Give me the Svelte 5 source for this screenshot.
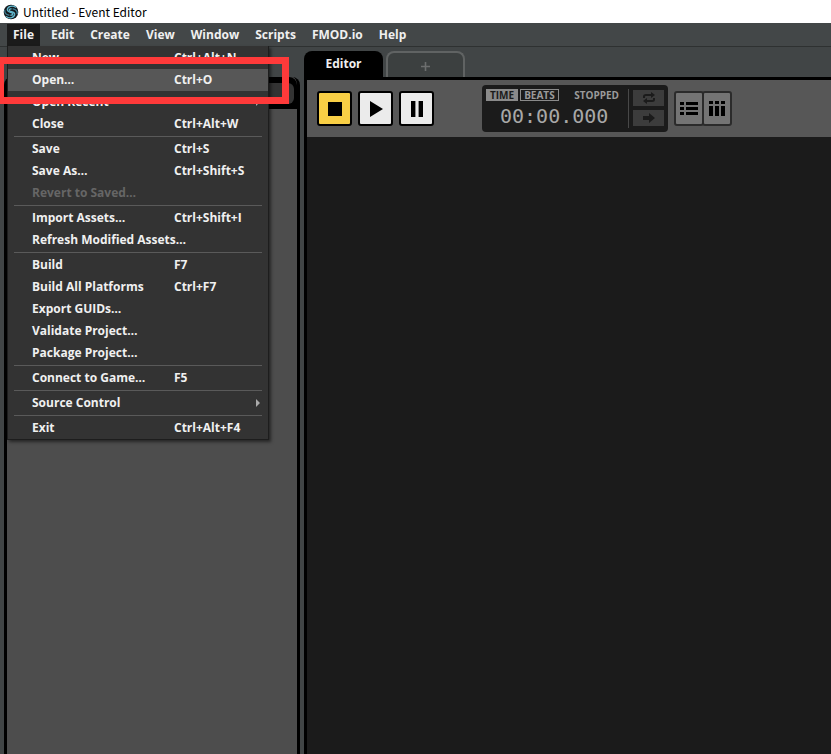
<script>
  const menus = ['File', 'Edit', 'Create', 'View', 'Window', 'Scripts', 'FMOD.io', 'Help'];
  const groups = [
    [
      { label: 'New', key: 'Ctrl+Alt+N' },
      { label: 'Open…', key: 'Ctrl+O', active: true },
      { label: 'Open Recent', sub: true },
      { label: 'Close', key: 'Ctrl+Alt+W' }
    ],
    [
      { label: 'Save', key: 'Ctrl+S' },
      { label: 'Save As…', key: 'Ctrl+Shift+S' },
      { label: 'Revert to Saved…', disabled: true }
    ],
    [
      { label: 'Import Assets…', key: 'Ctrl+Shift+I' },
      { label: 'Refresh Modified Assets…' }
    ],
    [
      { label: 'Build', key: 'F7' },
      { label: 'Build All Platforms', key: 'Ctrl+F7' },
      { label: 'Export GUIDs…' },
      { label: 'Validate Project…' },
      { label: 'Package Project…' }
    ],
    [{ label: 'Connect to Game…', key: 'F5' }],
    [{ label: 'Source Control', sub: true }],
    [{ label: 'Exit', key: 'Ctrl+Alt+F4' }]
  ];
</script>

<div class="app">
  <header class="title">
    <svg width="16" height="16" viewBox="0 0 16 16" aria-hidden="true">
      <circle cx="8" cy="8" r="7.3" fill="#14191d" />
      <g fill="none" stroke="#62b9d0" stroke-width="1.3" stroke-linecap="round">
        <path d="M12.6 3.2C9.6 1.2 4.6 2.4 4.3 5.6C4.2 8 7 8 9 8.8C10.6 9.6 9.6 11.4 7.8 11.2" />
        <path d="M3.4 12.8C6.4 14.8 11.4 13.6 11.7 10.4C11.8 8 9 8 7 7.2C5.4 6.4 6.4 4.6 8.2 4.8" />
        <path d="M1.8 6.4C1.5 9.3 3.2 10.6 6 11.2M14.2 9.6C14.5 6.7 12.8 5.4 10 4.8" stroke="#3e7d93" />
      </g>
    </svg>
    <span>Untitled - Event Editor</span>
  </header>

  <nav class="menubar">
    {#each menus as name, i}
      <div class="slot">
        <button class="top" class:open={i === 0}>{name}</button>
        {#if i === 0}
          <div class="menu" role="menu">
            {#each groups as group}
              <div class="group">
                {#each group as item}
                  <button class="item" class:active={item.active} disabled={item.disabled} role="menuitem">
                    <span class="name">{item.label}</span>
                    <span class="key">{item.key ?? ''}</span>
                    {#if item.sub}
                      <svg width="4" height="8" viewBox="0 0 4 8" aria-hidden="true"><path d="M0 0L4 4L0 8z" fill="#aaa" /></svg>
                    {/if}
                  </button>
                {/each}
              </div>
            {/each}
          </div>
        {/if}
      </div>
    {/each}
  </nav>

  <main class="work">
    <aside class="browser">
      <div class="search"><input type="text" aria-label="Search" /></div>
    </aside>

    <section class="editor">
      <div class="tabs">
        <button class="tab">Editor</button>
        <button class="tab add" aria-label="New tab">
          <svg width="9" height="9" viewBox="0 0 9 9"><path d="M4.5 0V9M0 4.5H9" stroke="#6c6e6e" stroke-width="1.6" /></svg>
        </button>
      </div>
      <div class="panel">
        <div class="toolbar">
          <div class="transport">
            <button class="play stop" aria-label="Stop"><svg width="14" height="14" viewBox="0 0 14 14"><path d="M0 0H14V14H0z" /></svg></button>
            <button class="play" aria-label="Play"><svg width="14" height="16" viewBox="0 0 14 16"><path d="M1 0L14 8L1 16z" /></svg></button>
            <button class="play" aria-label="Pause"><svg width="12" height="16" viewBox="0 0 12 16"><path d="M0 0H4.4V16H0zM7.6 0H12V16H7.6z" /></svg></button>
          </div>
          <div class="display">
            <div class="readout">
              <div class="modes">
                <button class="mode on">TIME</button>
                <button class="mode">BEATS</button>
                <span class="state">STOPPED</span>
              </div>
              <div class="clock">00:00.000</div>
            </div>
            <div class="flags">
              <button aria-label="Loop">
                <svg width="14" height="12" viewBox="0 0 14 12">
                  <path d="M2 6V4.5Q2 3 4 3H10M12 6V7.5Q12 9 10 9H4" fill="none" stroke="#1b1b1b" stroke-width="2" />
                  <path d="M9 0L13 3L9 6zM5 6L1 9L5 12z" fill="#1b1b1b" />
                </svg>
              </button>
              <button aria-label="Follow">
                <svg width="14" height="10" viewBox="0 0 14 10"><path d="M1 3H7V0L13 5L7 10V7H1z" fill="#1b1b1b" /></svg>
              </button>
            </div>
          </div>
          <div class="views">
            <button aria-label="List view">
              <svg width="18" height="13" viewBox="0 0 18 13"><path d="M0 0H4V3H0zM6 0H18V3H6zM0 5H4V8H0zM6 5H18V8H6zM0 10H4V13H0zM6 10H18V13H6z" /></svg>
            </button>
            <button aria-label="Mixer view">
              <svg width="16" height="15" viewBox="0 0 16 15"><path d="M0 0H4V3H0zM6 0H10V3H6zM12 0H16V3H12zM0 5H4V15H0zM6 5H10V15H6zM12 5H16V15H12z" /></svg>
            </button>
          </div>
        </div>
        <div class="canvas"></div>
      </div>
    </section>
  </main>

  <div class="callout"></div>
</div>

<style>
  :global(body) { margin: 0; }
  .app, .app * { box-sizing: border-box; }
  .app {
    position: relative;
    display: flex;
    flex-direction: column;
    height: 100vh;
    overflow: hidden;
    background: #414546;
    color: #f0f0f0;
    font: bold 12px/22px "Open Sans", "Noto Sans", sans-serif;
  }
  button { margin: 0; padding: 0; border: 0; background: none; color: inherit; font: inherit; }
  svg { display: block; }

  .title {
    display: flex;
    align-items: center;
    gap: 4px;
    height: 23px;
    padding-left: 3px;
    background: #fff;
    color: #000;
    font-family: "Noto Sans CJK SC", "Noto Sans", sans-serif;
    font-weight: normal;
    flex: none;
  }
  .menubar {
    display: flex;
    flex: none;
    height: 24px;
    padding: 1px 7px 0;
    background: #434748;
    border-bottom: 1px solid #2e3131;
  }
  .slot { position: relative; }
  .top { display: block; height: 22px; padding: 0 8px; white-space: nowrap; }
  .top.open { padding: 0 6px; background: #1b1b1b; }
  .slot:first-child { margin-right: 3px; }

  .menu {
    position: absolute;
    z-index: 5;
    top: 22px;
    left: 0;
    width: 262px;
    padding: 1px 0 0;
    background: #333;
    border: 1px solid #1d1d1d;
    border-top-width: 0;
    box-shadow: 2px 2px 3px rgba(0, 0, 0, 0.5);
  }
  .group + .group::before {
    content: "";
    display: block;
    height: 1px;
    margin: 1px 6px;
    background: #5a5a5a;
  }
  .item {
    display: flex;
    align-items: center;
    width: 100%;
    height: 22px;
    padding: 0 8px 0 24px;
    text-align: left;
    white-space: nowrap;
  }
  .item.active { background: #575757; }
  .item:disabled { color: #666; }
  .name { width: 142px; }
  .key { flex: 1; }

  .work { display: flex; flex: 1; min-height: 0; padding: 4px 0 0 4px; gap: 4px; }
  .browser {
    flex: 0 0 296px;
    margin-top: 26px;
    background: #4d4d4d;
    border: solid #000;
    border-width: 0 3px;
    border-radius: 8px 8px 0 0;
  }
  .search { height: 32px; padding: 6px 0 5px; background: #000; border-radius: 8px 8px 0 0; }
  .search input {
    display: block;
    width: calc(100% - 3px);
    height: 21px;
    padding: 0 8px;
    border: 0;
    border-radius: 6px;
    background: #333;
    color: inherit;
    font: inherit;
  }

  .editor { display: flex; flex: 1; flex-direction: column; min-width: 0; }
  .tabs { display: flex; gap: 3px; height: 26px; flex: none; }
  .tab { width: 79px; background: #000; border-radius: 8px 8px 0 0; padding-bottom: 1px; }
  .tab.add {
    display: flex;
    align-items: center;
    justify-content: center;
    padding-top: 3px;
    background: #3c4040;
    border: 2px solid #606363;
    border-bottom: 0;
  }
  .panel { display: flex; flex: 1; flex-direction: column; border: solid #000; border-width: 3px 0 0 3px; }
  .toolbar { display: flex; align-items: flex-start; height: 57px; padding: 5px 10px; background: #575757; flex: none; }
  .transport { display: flex; gap: 6px; margin: 6px 48px 0 0; }
  .play {
    display: flex;
    align-items: center;
    justify-content: center;
    width: 35px;
    height: 35px;
    border: 2px solid #000;
    border-radius: 3px;
    background: #ebebeb;
  }
  .stop { background: #f9cf45; }

  .display { display: flex; width: 186px; height: 47px; border-radius: 4px; background: #1b1b1b; padding: 4px; color: #9a9a9a; }
  .readout { flex: 1; border-right: 1px solid #484848; }
  .modes { display: flex; gap: 2px; align-items: center; height: 12px; font-size: 10px; line-height: 10px; }
  .mode { height: 12px; padding: 0 3px; border: 1px solid #8a8a8a; }
  .mode.on { background: #8a8a8a; color: #1b1b1b; }
  .state { margin-left: auto; margin-right: 9px; }
  .clock { padding: 3px 0 0 14px; font: 20px/24px "DejaVu Sans Mono", monospace; color: #a8a8a8; }
  .flags { display: flex; flex-direction: column; gap: 4px; padding: 1px 0 0 4px; }
  .flags button { display: flex; align-items: center; justify-content: center; width: 31px; height: 16px; background: #3c3c3c; }

  .views { display: flex; margin: 6px 0 0 6px; }
  .views button {
    display: flex;
    align-items: center;
    justify-content: center;
    width: 30px;
    height: 35px;
    border: 2px solid #2b2b2b;
    border-radius: 3px;
    background: #747474;
  }
  .views button + button { margin-left: -2px; }
  .canvas { flex: 1; background: #1b1b1b; }

  .callout {
    position: absolute;
    z-index: 9;
    top: 57px;
    left: 0;
    width: 289px;
    height: 47px;
    border: 7px solid #ff3a3a;
    border-left-width: 4px;
    pointer-events: none;
  }
</style>
